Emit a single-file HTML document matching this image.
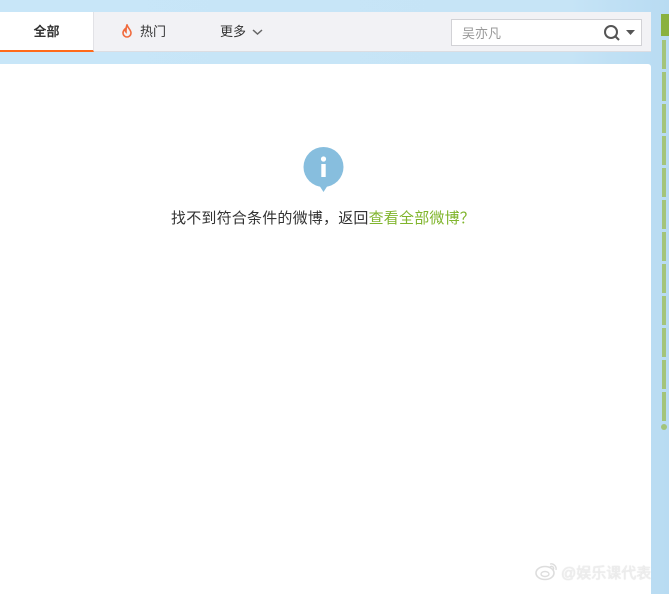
<!DOCTYPE html>
<html><head><meta charset="utf-8"><style>
*{margin:0;padding:0;box-sizing:border-box}
body{width:669px;height:589px;overflow:hidden;background:linear-gradient(90deg,#c8e6f8 0%,#c6e4f6 85%,#b8dbf2 100%);font-family:"Liberation Sans","Noto Sans CJK SC",sans-serif;position:relative}
.bar{position:absolute;left:0;top:12px;width:651px;height:40px;background:#f2f2f5;border-bottom:1px solid #dcdde2}
.t1{position:absolute;left:0;top:0;width:94px;height:40px;background:#fff;border-bottom:2px solid #ff6a1a;border-right:1px solid #e2e2e6;text-align:center;line-height:39px;font-size:13px;font-weight:bold;color:#333}
.t2{position:absolute;left:120px;top:0;line-height:40px;font-size:13px;color:#333}
.t3{position:absolute;left:220px;top:0;line-height:40px;font-size:13px;color:#333}
.search{position:absolute;left:451px;top:7px;width:191px;height:27px;background:#fff;border:1px solid #d2d2d6}
.search span{position:absolute;left:10px;top:3px;font-size:13px;color:#999}
.main{position:absolute;left:0;top:64px;width:651px;height:530px;background:#fff;border-radius:0 3px 0 0}
.msg{position:absolute;left:171px;top:207px;font-size:15px;color:#333;white-space:nowrap;font-family:"Noto Sans CJK SC",sans-serif;letter-spacing:0.2px}
.msg a{color:#80b52d;text-decoration:none}
.wm{position:absolute;left:561px;top:562px;font-size:15px;color:#eee;text-shadow:0 0 1px #ccc}
</style></head><body>
<div class="bar">
 <div class="t1">全部</div>
 <div class="t2"><svg width="14" height="14" viewBox="0 0 14 14" style="vertical-align:-2px;margin-right:6px"><path d="M7 1C8 4 11 6 11 9a4 4 0 0 1-8 0C3 7 4 6 5 5 5 7 6 8 6 8 6 6 6 3 7 1Z" fill="none" stroke="#f06a3c" stroke-width="1.6"/></svg>热门</div>
 <div class="t3">更多 <svg width="11" height="8" viewBox="0 0 11 8" style="margin-left:2px"><path d="M1 2l4.5 4L10 2" fill="none" stroke="#666" stroke-width="1.5"/></svg></div>
 <div class="search"><span>吴亦凡</span>
  <svg style="position:absolute;left:151px;top:4px" width="18" height="18" viewBox="0 0 18 18"><circle cx="8" cy="8" r="6" fill="none" stroke="#555" stroke-width="2"/><path d="M12 12l4 4" stroke="#555" stroke-width="2"/></svg>
  <svg style="position:absolute;left:174px;top:10px" width="9" height="6" viewBox="0 0 9 6"><path d="M0 0h9L4.5 5z" fill="#555"/></svg>
 </div>
</div>
<div class="main"></div>
<svg style="position:absolute;left:303px;top:147px" width="41" height="46" viewBox="0 0 41 46"><circle cx="20.5" cy="20" r="20" fill="#87bede"/><path d="M16 38l4.5 7 4.5-7z" fill="#87bede"/><circle cx="20.5" cy="12" r="2.6" fill="#fff"/><rect x="18.3" y="17" width="4.4" height="13" fill="#fff"/></svg>
<div class="msg">找不到符合条件的微博，返回<a>查看全部微博？</a></div>
<svg style="position:absolute;left:660px;top:14px" width="9" height="420" viewBox="0 0 9 420">
<rect x="1" y="0" width="8" height="22" fill="#8ab13f"/>
<g fill="#a3c47a">
<rect x="2" y="26" width="4" height="29"/><rect x="2" y="58" width="4" height="29"/><rect x="2" y="90" width="4" height="29"/><rect x="2" y="122" width="4" height="29"/><rect x="2" y="154" width="4" height="29"/><rect x="2" y="186" width="4" height="29"/><rect x="2" y="218" width="4" height="29"/><rect x="2" y="250" width="4" height="29"/><rect x="2" y="282" width="4" height="29"/><rect x="2" y="314" width="4" height="29"/><rect x="2" y="346" width="4" height="29"/><rect x="2" y="378" width="4" height="29"/>
<circle cx="4" cy="413" r="3"/></g></svg>
<svg style="position:absolute;left:535px;top:561px" width="24" height="20" viewBox="0 0 24 20"><ellipse cx="10" cy="12" rx="9" ry="6.5" fill="none" stroke="#ddd" stroke-width="1.6"/><ellipse cx="10" cy="13" rx="4" ry="2.5" fill="none" stroke="#ddd" stroke-width="1.4"/><path d="M15 3a5 5 0 0 1 6 6M15 6a2 2 0 0 1 3 3" fill="none" stroke="#ddd" stroke-width="1.4"/></svg>
<div class="wm">@娱乐课代表</div>
</body></html>
